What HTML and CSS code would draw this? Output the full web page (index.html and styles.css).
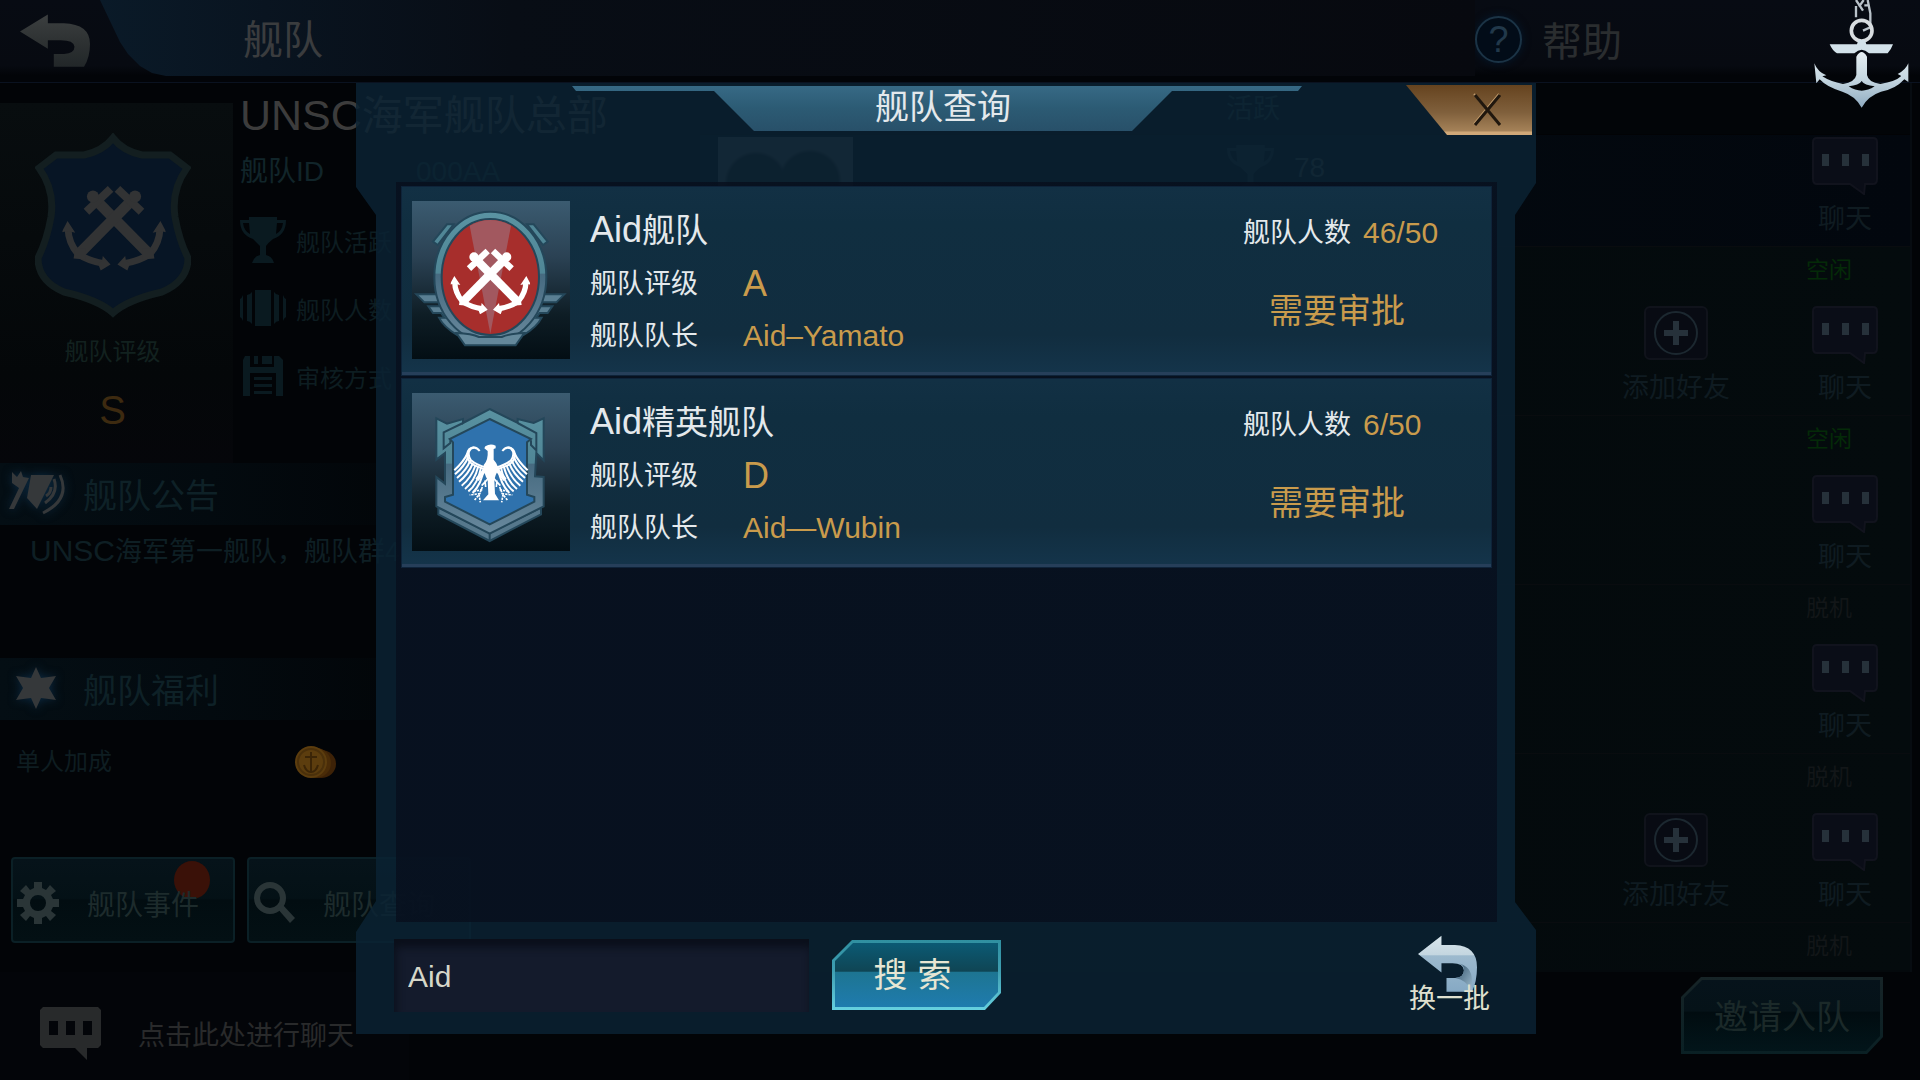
FILE: index.html
```html
<!DOCTYPE html>
<html lang="zh-CN">
<head>
<meta charset="utf-8">
<meta name="viewport" content="width=device-width, initial-scale=1">
<title>舰队查询</title>
<link rel="stylesheet" href="styles.css">
</head>
<body>
<svg class="defs" aria-hidden="true">
  <defs>
    <linearGradient id="steel" x1="0" y1="0" x2="0" y2="1">
      <stop offset="0" stop-color="#d9e6ec"/><stop offset=".34" stop-color="#c4d6e0"/>
      <stop offset=".36" stop-color="#9dbace"/><stop offset="1" stop-color="#86a9c4"/>
    </linearGradient>
    <linearGradient id="curl" x1="0" y1="0" x2="1" y2="1">
      <stop offset="0" stop-color="#2f5068"/><stop offset="1" stop-color="#9fbdd0"/>
    </linearGradient>
    <linearGradient id="dull" x1="0" y1="0" x2="0" y2="1">
      <stop offset="0" stop-color="#3c3f40"/><stop offset=".5" stop-color="#2e3233"/><stop offset="1" stop-color="#222729"/>
    </linearGradient>
    <linearGradient id="frame" gradientUnits="userSpaceOnUse" x1="0" y1="70" x2="0" y2="470">
      <stop offset="0" stop-color="#5a93a2"/><stop offset=".45" stop-color="#508696"/>
      <stop offset=".46" stop-color="#466a80"/><stop offset="1" stop-color="#6a8a9e"/>
    </linearGradient>
    <linearGradient id="chrome" x1="0" y1="0" x2="0" y2="1">
      <stop offset="0" stop-color="#e6eef2"/><stop offset=".5" stop-color="#c4d6e0"/><stop offset="1" stop-color="#8fabc0"/>
    </linearGradient>
    <symbol id="anchor" viewBox="150 175 240 200">
      <path d="M226 208L354 338" fill="none" stroke="currentColor" stroke-width="25"/>
      <path d="M262 184L206 237" fill="none" stroke="currentColor" stroke-width="19"/>
      <circle cx="221" cy="202" r="14" fill="currentColor"/>
      <path d="M377 276Q376 310 354 335Q330 352 292 358" fill="none" stroke="currentColor" stroke-width="16"/>
      <path d="M336 322l24 0l4 24l-28 2zM378 259l14 26l-14-3l-18 4zM278 360l18-20l2 12l9 6l-6 16z" fill="currentColor"/>
    </symbol>
    <symbol id="anchors" viewBox="150 175 240 200">
      <use href="#anchor" x="150" y="175" width="240" height="200"/>
      <g transform="translate(540 0) scale(-1 1)"><use href="#anchor" x="150" y="175" width="240" height="200"/></g>
    </symbol>
    <symbol id="back" viewBox="55 465 176 172" preserveAspectRatio="none">
      <path d="M55 522L125 467V495H165Q231 498 231 562Q231 605 216 636H140V595H166Q192 592 192 571Q190 549 155 550H125V578Z"/>
    </symbol>
    <symbol id="cup" viewBox="0 0 46 46" preserveAspectRatio="none">
      <path d="M9 0H37V3H46Q46 18 33 22Q28 26 26 29V38Q32 39 34 46H12Q14 39 20 38V29Q17 26 13 22Q0 18 0 3H9ZM9 6H3Q4 14 10 17ZM37 6L36 17Q42 14 43 6Z" fill-rule="evenodd"/>
    </symbol>
    <symbol id="bubble" viewBox="0 0 66 58">
      <path d="M5 1H61Q65 1 65 5V42Q65 47 61 47H53L52 57L38 47H5Q1 47 1 42V5Q1 1 5 1Z" fill="#0a0d17" stroke="#11131d" stroke-width="2"/>
      <path d="M10 17h7v12h-7zM30 17h7v12h-7zM50 17h7v12h-7z" fill="#26313a"/>
    </symbol>
    <symbol id="plus" viewBox="0 0 64 54">
      <rect x="1" y="1" width="62" height="52" rx="5" fill="#080b13" stroke="#10131b" stroke-width="2"/>
      <circle cx="32" cy="27" r="21" fill="none" stroke="#1c2830" stroke-width="2"/>
      <path d="M29 15h6v9h9v6h-9v9h-6v-9h-9v-6h9z" fill="#26313a"/>
    </symbol>
  </defs>
</svg>

<div class="page">
  <header class="topbar">
    <button class="topbar-back" type="button" aria-label="返回"><svg class="icon-back" fill="url(#dull)"><use href="#back"/></svg></button>
    <div class="topbar-plate"><h1 class="topbar-title">舰队</h1></div>
    <a class="help" href="#help"><span class="help-mark">?</span>帮助</a>
    <svg class="top-anchor" viewBox="95 0 300 330" aria-hidden="true">
      <path d="M227 18V52M227 0L248 32M250 0L236 20M262 0L270 40V82L248 92M252 16H268" fill="none" stroke="#b9c2c9" stroke-width="7"/>
      <circle cx="244" cy="92" r="31" fill="none" stroke="#d8dde0" stroke-width="11"/>
      <path d="M234 120H254L258 133H338Q332 150 322 160H266Q244 138 222 160H170Q156 152 148 133H230Z" fill="#d3e2ea"/>
      <path d="M228 170Q244 142 260 170V225Q264 247 300 252Q345 245 363 228L352 222Q376 210 384 190V246L372 238Q345 268 302 275Q262 288 244 323Q226 288 186 275Q140 262 118 238L108 250L102 190Q112 216 138 226L126 229Q150 245 188 252Q224 246 228 225ZM205 259Q244 285 283 259Q252 256 244 243Q236 256 205 259Z" fill="url(#chrome)" fill-rule="evenodd"/>
    </svg>
  </header>

  <main class="content">
    <aside class="side">
      <section class="profile">
        <div class="crest-card">
          <svg class="crest" viewBox="33 133 156 185" aria-hidden="true">
            <path d="M111 138Q121 151 140 155H168L185 168Q169 190 173 217Q177 240 186 258Q186 281 160 292Q125 300 111 313Q97 300 62 292Q36 281 36 258Q45 240 49 217Q53 190 37 168L54 155H82Q101 151 111 138Z" fill="#071525" stroke="#131e20" stroke-width="7"/>
            <svg class="dim-anchors" x="60" y="185" width="104" height="86"><use href="#anchors"/></svg>
          </svg>
          <p class="crest-label">舰队评级</p>
          <p class="crest-grade">S</p>
        </div>
        <div class="facts">
          <h2 class="fleet-name"><span class="latin-xl">UNSC</span>海军舰队总部</h2>
          <p class="fleet-id"><span>舰队ID</span><span>000AA</span></p>
          <ul class="stats">
            <li><svg class="stat-icon" viewBox="0 0 46 46"><use href="#cup"/></svg>舰队活跃</li>
            <li><svg class="stat-icon" viewBox="0 0 46 46"><path d="M15 5H31V41H15ZM7 10Q10 10 12 7V39Q10 36 7 36ZM39 10Q36 10 34 7V39Q36 36 39 36ZM0 14Q2 13 3 10V36Q2 33 0 32ZM46 14Q44 13 43 10V36Q44 33 46 32Z"/></svg>舰队人数</li>
            <li><svg class="stat-icon" viewBox="0 0 46 46"><path fill-rule="evenodd" d="M5 3H10V14H34V3H39L43 7V43H3V7ZM14 3H18V11H14ZM22 3H32V11H22ZM10 20H36V43H10ZM14 24V27H32V24ZM14 31V34H32V31ZM14 38V41H32V38Z"/></svg>审核方式</li>
          </ul>
        </div>
      </section>

      <section class="block">
        <h3 class="block-title">
          <svg class="block-icon" viewBox="0 0 56 44" fill="#35383a"><path d="M3 1L8 6L12 0L14 6L20 7L5 38H0L10 17L3 12ZM22 4H45L28 38L18 27Z"/><path d="M45 8Q50 22 36 32M51 4Q62 28 34 42M42 16Q42 22 37 25" fill="none" stroke="#35383a" stroke-width="3"/></svg>
          舰队公告</h3>
        <p class="notice"><span class="latin-m">UNSC</span>海军第一舰队，舰队群4</p>
      </section>

      <section class="block">
        <h3 class="block-title">
          <svg class="block-icon" viewBox="0 0 56 44"><path d="M27 1L32 12L47 10L40 22L47 34L32 32L27 43L22 32L7 34L14 22L7 10L22 12Z" fill="#35383a"/></svg>
          舰队福利</h3>
        <p class="bonus"><span>单人加成</span>
          <svg class="coin" viewBox="0 0 42 34" aria-hidden="true"><ellipse cx="27" cy="19" rx="15" ry="14" fill="#3d2207"/><ellipse cx="22" cy="18" rx="15" ry="15" fill="#4a2c08"/><circle cx="17" cy="17" r="16" fill="#5c3d0e"/><circle cx="17" cy="17" r="13" fill="none" stroke="#4a300b" stroke-width="2"/><path d="M17 7V27M11 12H23M10 20Q12 27 17 27Q22 27 24 20" fill="none" stroke="#3b2507" stroke-width="2"/></svg>
        </p>
      </section>

      <nav class="side-actions">
        <button class="side-button" type="button">
          <svg class="side-icon" viewBox="0 0 42 42"><path fill-rule="evenodd" d="M17 0H25V6L29 8L33 3L39 9L34 13L36 17H42V25H36L34 29L39 33L33 39L29 34L25 36V42H17V36L13 34L9 39L3 33L8 29L6 25H0V17H6L8 13L3 9L9 3L13 8L17 6ZM21 13A8 8 0 1 0 21 29A8 8 0 1 0 21 13Z"/></svg>
          <span>舰队事件</span><i class="alert-dot"></i>
        </button>
        <button class="side-button" type="button">
          <svg class="side-icon" viewBox="0 0 42 42"><circle cx="17" cy="16" r="13" fill="none" stroke="#2a3537" stroke-width="6"/><path d="M24 26L29 22L42 36L37 41Z"/></svg>
          <span>舰队查询</span>
        </button>
      </nav>
    </aside>

    <section class="members">
      <div class="members-head">活跃</div>
      <div class="member member-first">
        <div class="portrait"></div>
        <div class="activity"><svg class="activity-cup"><use href="#cup"/></svg>78</div>
        <div class="actions"><button class="act" type="button"><svg class="act-bubble"><use href="#bubble"/></svg>聊天</button></div>
      </div>
      <div class="member">
        <p class="status online">空闲</p>
        <div class="actions">
          <button class="act" type="button"><svg class="act-plus"><use href="#plus"/></svg>添加好友</button>
          <button class="act" type="button"><svg class="act-bubble"><use href="#bubble"/></svg>聊天</button>
        </div>
      </div>
      <div class="member">
        <p class="status online">空闲</p>
        <div class="actions"><button class="act" type="button"><svg class="act-bubble"><use href="#bubble"/></svg>聊天</button></div>
      </div>
      <div class="member">
        <p class="status">脱机</p>
        <div class="actions"><button class="act" type="button"><svg class="act-bubble"><use href="#bubble"/></svg>聊天</button></div>
      </div>
      <div class="member">
        <p class="status">脱机</p>
        <div class="actions">
          <button class="act" type="button"><svg class="act-plus"><use href="#plus"/></svg>添加好友</button>
          <button class="act" type="button"><svg class="act-bubble"><use href="#bubble"/></svg>聊天</button>
        </div>
      </div>
      <div class="member member-last"><p class="status">脱机</p></div>
    </section>
  </main>

  <footer class="bottombar">
    <button class="chat" type="button">
      <svg class="chat-icon" viewBox="0 0 61 53"><path fill-rule="evenodd" d="M3 0H58L61 3V38L58 41H47V53L35 41H3L0 38V3ZM9 14V28H18V14ZM26 14V28H35V14ZM43 14V28H52V14Z" fill="#282a2b"/></svg>
      点击此处进行聊天</button>
    <button class="cut invite" type="button">邀请入队</button>
  </footer>
</div>

<div class="overlay">
  <section class="dialog" role="dialog" aria-labelledby="dialog-title">
    <header class="dialog-head">
      <h2 class="dialog-title" id="dialog-title">舰队查询</h2>
      <button class="close" type="button" aria-label="关闭">
        <svg class="close-icon" viewBox="0 0 30 34"><path d="M3 2L28 32M28 2L3 32" fill="none" stroke="#c19a6b" stroke-width="2" transform="translate(-1 -1)"/><path d="M3 2L28 32M28 2L3 32" fill="none" stroke="#20170e" stroke-width="3"/></svg>
      </button>
    </header>

    <ul class="results">
      <li class="fleet">
        <svg class="avatar" viewBox="35 34 474 474" aria-hidden="true">
          <g stroke="#24475a" stroke-width="6">
            <path d="M98 156L140 104H160L112 166ZM442 156L400 104H380L428 166Z" fill="#508696"/>
            <path id="wing" d="M48 314H132L150 370L200 436H170Q130 412 116 384H132L122 370H98L84 350H120L114 338H72Z" fill="#5a7f93"/>
            <use href="#wing" transform="translate(540 0) scale(-1 1)"/>
            <ellipse cx="270" cy="262" rx="168" ry="196" fill="url(#frame)"/>
            <path d="M168 430Q215 432 236 442H304Q325 432 372 430L346 467H194Z" fill="#64889b"/>
            <ellipse cx="270" cy="262" rx="146" ry="174" fill="#a72e2c"/>
          </g>
          <path d="M208 108A143 171 0 0 1 332 108L270 432Z" fill="#a2585f"/>
          <svg class="white-anchors" x="150" y="175" width="240" height="200"><use href="#anchors"/></svg>
        </svg>
        <div class="info">
          <h3 class="name"><span class="latin-l">Aid</span>舰队</h3>
          <p class="field"><span>舰队评级</span><b class="grade">A</b></p>
          <p class="field"><span>舰队队长</span><b class="captain">Aid–Yamato</b></p>
        </div>
        <div class="join">
          <p class="count">舰队人数<b class="captain">46/50</b></p>
          <p class="approval">需要审批</p>
        </div>
      </li>
      <li class="fleet">
        <svg class="avatar" viewBox="35 40 474 474" aria-hidden="true">
          <g stroke="#24475a" stroke-width="6" stroke-linejoin="miter">
            <path d="M114 384V404L268 484L422 404V384L268 460Z" fill="#56788c"/>
            <path d="M268 460V484" fill="none"/>
            <path d="M268 88L352 130V118L400 130L430 116V242L408 220L404 290L430 292V380L268 462L108 380V292L134 312V220L108 240V116L140 132L188 118V130Z" fill="url(#frame)"/>
            <path d="M352 130L408 160V212L392 196V182M188 130L130 158V206L150 190V182" fill="none"/>
            <path d="M268 118L392 178L380 188V345L402 352V366L268 434L134 366V352L158 345V188L148 178Z" fill="#2f72ad"/>
          </g>
          <g fill="#fff">
            <path d="M255 200Q270 190 286 198V206L280 208V240Q296 258 292 274Q284 288 282 300L284 342L296 362H248L264 344L262 300Q250 284 250 256Q264 242 262 214L252 206Z"/>
            <g id="eagle-wing" fill="none" stroke="#fff">
              <path d="M238 214Q226 198 212 207Q198 222 212 242Q228 256 258 264" stroke-width="6"/>
              <path d="M222 203Q202 204 200 226Q202 248 224 258L256 270" stroke-width="6"/>
              <path d="M202 220Q190 246 162 272M204 232Q192 260 164 284M210 242Q198 272 170 295M218 250Q204 284 176 306M226 256Q212 296 184 318M234 260Q222 306 194 328M242 264Q232 314 204 335M250 268Q244 312 217 340" stroke-width="6"/>
              <path d="M260 262L230 300" stroke-width="12"/>
              <path d="M264 296L244 318M254 302L256 322" stroke-width="5"/>
              <path d="M246 322L238 342L208 346M240 340L222 362M236 344L240 368M246 330L216 336" stroke-width="5" stroke-dasharray="7 3"/>
            </g>
            <use href="#eagle-wing" transform="translate(544 0) scale(-1 1)"/>
          </g>
        </svg>
        <div class="info">
          <h3 class="name"><span class="latin-l">Aid</span>精英舰队</h3>
          <p class="field"><span>舰队评级</span><b class="grade">D</b></p>
          <p class="field"><span>舰队队长</span><b class="captain">Aid—Wubin</b></p>
        </div>
        <div class="join">
          <p class="count">舰队人数<b class="captain">6/50</b></p>
          <p class="approval">需要审批</p>
        </div>
      </li>
    </ul>

    <form class="search">
      <input class="search-input" type="text" value="Aid" aria-label="舰队名称">
      <button class="cut search-button" type="button">搜<span>索</span></button>
      <button class="refresh" type="button">
        <svg class="refresh-icon"><svg viewBox="55 465 176 172" preserveAspectRatio="none"><path d="M55 522L125 467V495H165Q231 498 231 562Q231 605 216 636H140V595H166Q192 592 192 571Q190 549 155 550H125V578Z" fill="url(#steel)"/><path d="M192 571Q192 555 178 551Q214 560 216 600V636Q200 600 166 595Q192 592 192 571Z" fill="url(#curl)"/></svg></svg>
        <span>换一批</span>
      </button>
    </form>
  </section>
</div>
</body>
</html>
```
FILE: styles.css
```css
* { box-sizing: border-box; margin: 0; padding: 0; }

body {
  background: #020407;
  color: #e4e9ec;
  font-family: "Liberation Sans", "Noto Sans CJK SC", sans-serif;
  font-size: 27px;
}

button, input { font: inherit; color: inherit; background: none; border: 0; }
button { cursor: pointer; }
h1, h2, h3, b { font-weight: 400; }
ul { list-style: none; }
a { color: inherit; text-decoration: none; }
svg { display: block; flex: none; }
.defs { position: absolute; width: 0; height: 0; }

.latin-xl { font-size: 43px; }
.latin-l { font-size: 36px; }
.latin-m { font-size: 30px; }

.page { display: flex; flex-direction: column; min-height: 100vh; overflow: hidden; }

/* top bar */
.topbar {
  position: relative;
  display: flex;
  align-items: flex-start;
  height: 83px;
  background: linear-gradient(#070b13, #070a11 80%, #020408 92%);
  border-bottom: 1px solid #0a1220;
}
.topbar-back { width: 100px; height: 82px; padding: 14px 10px 15px 20px; }
.icon-back { width: 70px; height: 53px; }
.topbar-plate {
  flex: 1;
  height: 76px;
  padding-left: 143px;
  background: linear-gradient(90deg, #0a1a28, #091420 12%, #080d15 30%, #07090f);
  clip-path: polygon(0 0, 100% 0, 100% 100%, 66px 100%, 52px 73px, 40px 66px, 28px 54px, 20px 42px);
}
.topbar-title { font-size: 40px; line-height: 80px; color: #3a3c3e; }
.help {
  display: flex;
  align-items: center;
  gap: 20px;
  height: 78px;
  padding-right: 298px;
  font-size: 40px;
  color: #2a2d2f;
}
.help-mark {
  width: 47px;
  height: 47px;
  border: 2px solid #1b3345;
  border-radius: 50%;
  background: #020c18;
  box-shadow: 0 0 8px #04182c;
  color: #21384a;
  font-size: 36px;
  line-height: 43px;
  text-align: center;
}
.top-anchor { position: absolute; top: 0; right: 8px; width: 100px; height: 110px; z-index: 3; }

/* page body */
.content { display: grid; grid-template-columns: 700fr 1212fr; flex: 1; padding-right: 8px; }

.profile { display: flex; gap: 7px; }
.crest-card {
  flex: none;
  display: flex;
  flex-direction: column;
  align-items: center;
  width: 233px;
  margin-top: 20px;
  padding: 30px 8px 29px 0;
  background: linear-gradient(#080d0f, #040709 75%, #05060a);
}
.crest { width: 156px; height: 185px; }
.dim-anchors { color: #323334; }
.crest-label { margin-top: 18px; font-size: 24px; line-height: 32px; color: #12211f; }
.crest-grade { margin-top: 18px; font-size: 40px; line-height: 48px; color: #3d2a10; }
.fleet-name { margin-top: 4px; font-size: 41px; line-height: 56px; color: #3c3c3c; white-space: nowrap; }
.fleet-id { display: flex; gap: 92px; margin-top: 12px; font-size: 28px; line-height: 32px; color: #11252a; }
.stats { margin-top: 18px; }
.stats li { display: flex; align-items: center; gap: 10px; height: 68px; font-size: 24px; color: #0d1d21; }
.stat-icon { width: 46px; height: 46px; fill: #0a1a20; }

.block { min-height: 195px; }
.block-title {
  display: flex;
  align-items: center;
  gap: 18px;
  height: 62px;
  padding: 0 0 2px 9px;
  font-size: 34px;
  color: #0e2127;
  background: linear-gradient(90deg, #040e14, #030a0f 30%, #020508 60%);
}
.block-icon { width: 56px; height: 44px; filter: drop-shadow(0 0 5px #0c2a42); }
.notice { padding: 10px 0 0 30px; line-height: 32px; color: #0e1f24; white-space: nowrap; }
.bonus { display: flex; align-items: center; gap: 182px; padding: 25px 0 0 16px; font-size: 24px; line-height: 34px; color: #0e1d21; }
.coin { width: 42px; height: 34px; }

.side-actions { display: flex; gap: 12px; padding: 4px 0 0 11px; }
.side-button {
  position: relative;
  isolation: isolate;
  display: flex;
  align-items: center;
  gap: 28px;
  width: 224px;
  height: 86px;
  padding: 5px 0 0 4px;
  border: 2px solid #0b2026;
  border-radius: 4px;
  background: linear-gradient(#06131a, #041116 48%, #020d11 50%, #031014);
  font-size: 28px;
  color: #1d2b2c;
  white-space: nowrap;
}
.side-icon { width: 42px; height: 42px; fill: #2a3537; }
.alert-dot { position: absolute; top: 2px; right: 23px; width: 36px; height: 38px; border-radius: 50%; background: #3a1108; z-index: -1; }

/* member list */
.members { background: #04090c; border-right: 2px solid #070c11; }
.members-head { height: 52px; padding-left: 526px; background: #020508; border-bottom: 1px solid #020305; font-size: 27px; line-height: 52px; color: #1b2b30; }
.member { height: 169px; padding: 11px 32px 0 18px; background: linear-gradient(90deg, #03080c, #040b0d); border-bottom: 1px solid #090c0f; }
.member-first { display: flex; align-items: flex-start; height: 112px; padding-top: 2px; background: linear-gradient(90deg, #050b10, #02070e); }
.member-first .actions { flex: 1; margin: 0; }
.member-last { height: 47px; border: 0; }
.portrait {
  width: 135px;
  height: 108px;
  background: radial-gradient(circle at 38px 46px, #15191c 28px, transparent 32px), radial-gradient(circle at 92px 44px, #15191c 28px, transparent 32px), #3c4044;
}
.activity { display: flex; align-items: center; gap: 20px; margin: 8px 0 0 374px; font-size: 28px; line-height: 46px; color: #30383a; }
.activity-cup { width: 47px; height: 46px; fill: #15222a; }
.status { padding-right: 26px; font-size: 23px; line-height: 24px; text-align: right; color: #121618; }
.online { color: #042a08; }
.actions { display: flex; justify-content: flex-end; gap: 82px; margin-top: 24px; }
.act { display: flex; flex-direction: column; align-items: center; justify-content: space-between; height: 97px; line-height: 30px; color: #0f1b21; }
.act-bubble { width: 66px; height: 58px; }
.act-plus { width: 64px; height: 54px; }

/* bottom bar */
.bottombar { display: flex; align-items: flex-start; justify-content: space-between; height: 108px; padding-right: 37px; }
.chat { display: flex; align-items: center; gap: 37px; width: 409px; height: 108px; padding: 14px 0 0 40px; background: #030509; color: #292a2b; white-space: nowrap; }
.chat-icon { width: 61px; height: 53px; }

/* buttons with two cut corners */
.cut {
  position: relative;
  isolation: isolate;
  background: var(--edge);
  clip-path: polygon(20px 0, 100% 0, 100% calc(100% - 17px), calc(100% - 16px) 100%, 0 100%, 0 20px);
}
.cut::before {
  content: "";
  position: absolute;
  inset: 3px;
  z-index: -1;
  background: var(--face);
  clip-path: polygon(18px 0, 100% 0, 100% calc(100% - 15px), calc(100% - 14px) 100%, 0 100%, 0 18px);
}
.invite {
  --edge: linear-gradient(#172427, #0a2024);
  --face: linear-gradient(#06131b, #051218 44%, #010c10 45%, #02151a);
  width: 202px;
  height: 77px;
  margin-top: 5px;
  padding-bottom: 2px;
  font-size: 34px;
  color: #1b2929;
}

/* search dialog */
.overlay {
  position: absolute;
  top: 0;
  left: 0;
  display: flex;
  width: 100%;
  min-height: 100vh;
  padding: 83px 20% 46px 356px;
  pointer-events: none;
}
.dialog {
  flex: 1;
  display: flex;
  flex-direction: column;
  padding: 2px 0 22px;
  background: rgba(11, 35, 51, .84);
  clip-path: polygon(0 0, 100% 0, 100% 100px, calc(100% - 21px) 132px, calc(100% - 21px) calc(100% - 132px), 100% calc(100% - 104px), 100% 100%, 0 100%, 0 calc(100% - 102px), 20px calc(100% - 133px), 20px 132px, 0 104px);
  pointer-events: auto;
}
.dialog-head { display: grid; grid-template-columns: 1fr 126px; gap: 104px; padding: 0 4px 0 216px; }
.dialog-title {
  height: 46px;
  background: linear-gradient(#376a86, #2c5b74 50%, #285069);
  clip-path: polygon(0 1px, 100% 1px, calc(100% - 4px) 6px, calc(100% - 130px) 6px, calc(100% - 170px) 46px, 182px 46px, 142px 6px, 4px 6px);
  padding-left: 12px;
  font-size: 34px;
  line-height: 44px;
  text-align: center;
}
.close {
  display: grid;
  place-items: center;
  height: 50px;
  padding-left: 36px;
  background: linear-gradient(#65431f, #80603c 55%, #a58258 92%, #d0a878 94%);
  clip-path: polygon(0 0, 100% 0, 100% 100%, 41px 100%);
}
.close-icon { width: 30px; height: 34px; }

.results {
  flex: 1;
  display: flex;
  flex-direction: column;
  gap: 4px;
  margin: 47px 39px 17px 40px;
  padding: 5px 6px 0;
  background: linear-gradient(rgba(7, 14, 28, .8), rgba(7, 14, 28, .8));
}
.fleet {
  display: flex;
  gap: 20px;
  height: 188px;
  padding: 14px 0 0 10px;
  background: linear-gradient(#123044, #102e40 20%, #112d3f 80%, #14344a);
  border-bottom: 3px solid #263f5a;
  box-shadow: 0 0 0 1px #0e2339;
}
.avatar { width: 158px; height: 158px; background: linear-gradient(#3b5b70, #2b4254 35%, #0e1d25 72%, #030e14); }
.white-anchors { color: #fff; }
.info { flex: 1; display: flex; flex-direction: column; gap: 12px; padding-top: 11px; line-height: 40px; white-space: nowrap; }
.name { height: 40px; font-size: 33px; line-height: 36px; }
.field { display: grid; grid-template-columns: 153px 1fr; height: 40px; }
.grade { font-size: 36px; color: #c99b4c; }
.captain { font-size: 30px; color: #c99b4c; }
.join { width: 248px; padding-top: 12px; line-height: 40px; }
.count { display: flex; gap: 12px; }
.approval { margin-top: 38px; padding-left: 26px; font-size: 34px; color: #c99b4c; }

.search { display: flex; align-items: flex-start; padding: 0 46px 0 38px; }
.search-input {
  width: 415px;
  height: 73px;
  padding: 2px 14px 0;
  background: #141b2c;
  box-shadow: inset 2px 8px 8px #0a0f1a;
  font-size: 30px;
  color: #d6d7c9;
  outline: 0;
}
.search-button {
  --edge: linear-gradient(#2f8fa0, #3f9fb2 45%, #66d0df);
  --face: linear-gradient(#0b5a74, #0f4554 44%, #1d7592 46%, #1f7bae);
  width: 169px;
  height: 70px;
  margin: 1px auto 0 23px;
  padding: 0 8px 6px 0;
  font-size: 34px;
  color: #e6e6d3;
}
.search-button span { margin-left: 10px; }
.refresh { display: flex; flex-direction: column; align-items: center; height: 77px; margin-top: -4px; line-height: 30px; color: #dfe0cf; }
.refresh-icon { width: 59px; height: 57px; margin-left: -4px; }
.refresh span { margin-top: -8px; z-index: 1; }
```
